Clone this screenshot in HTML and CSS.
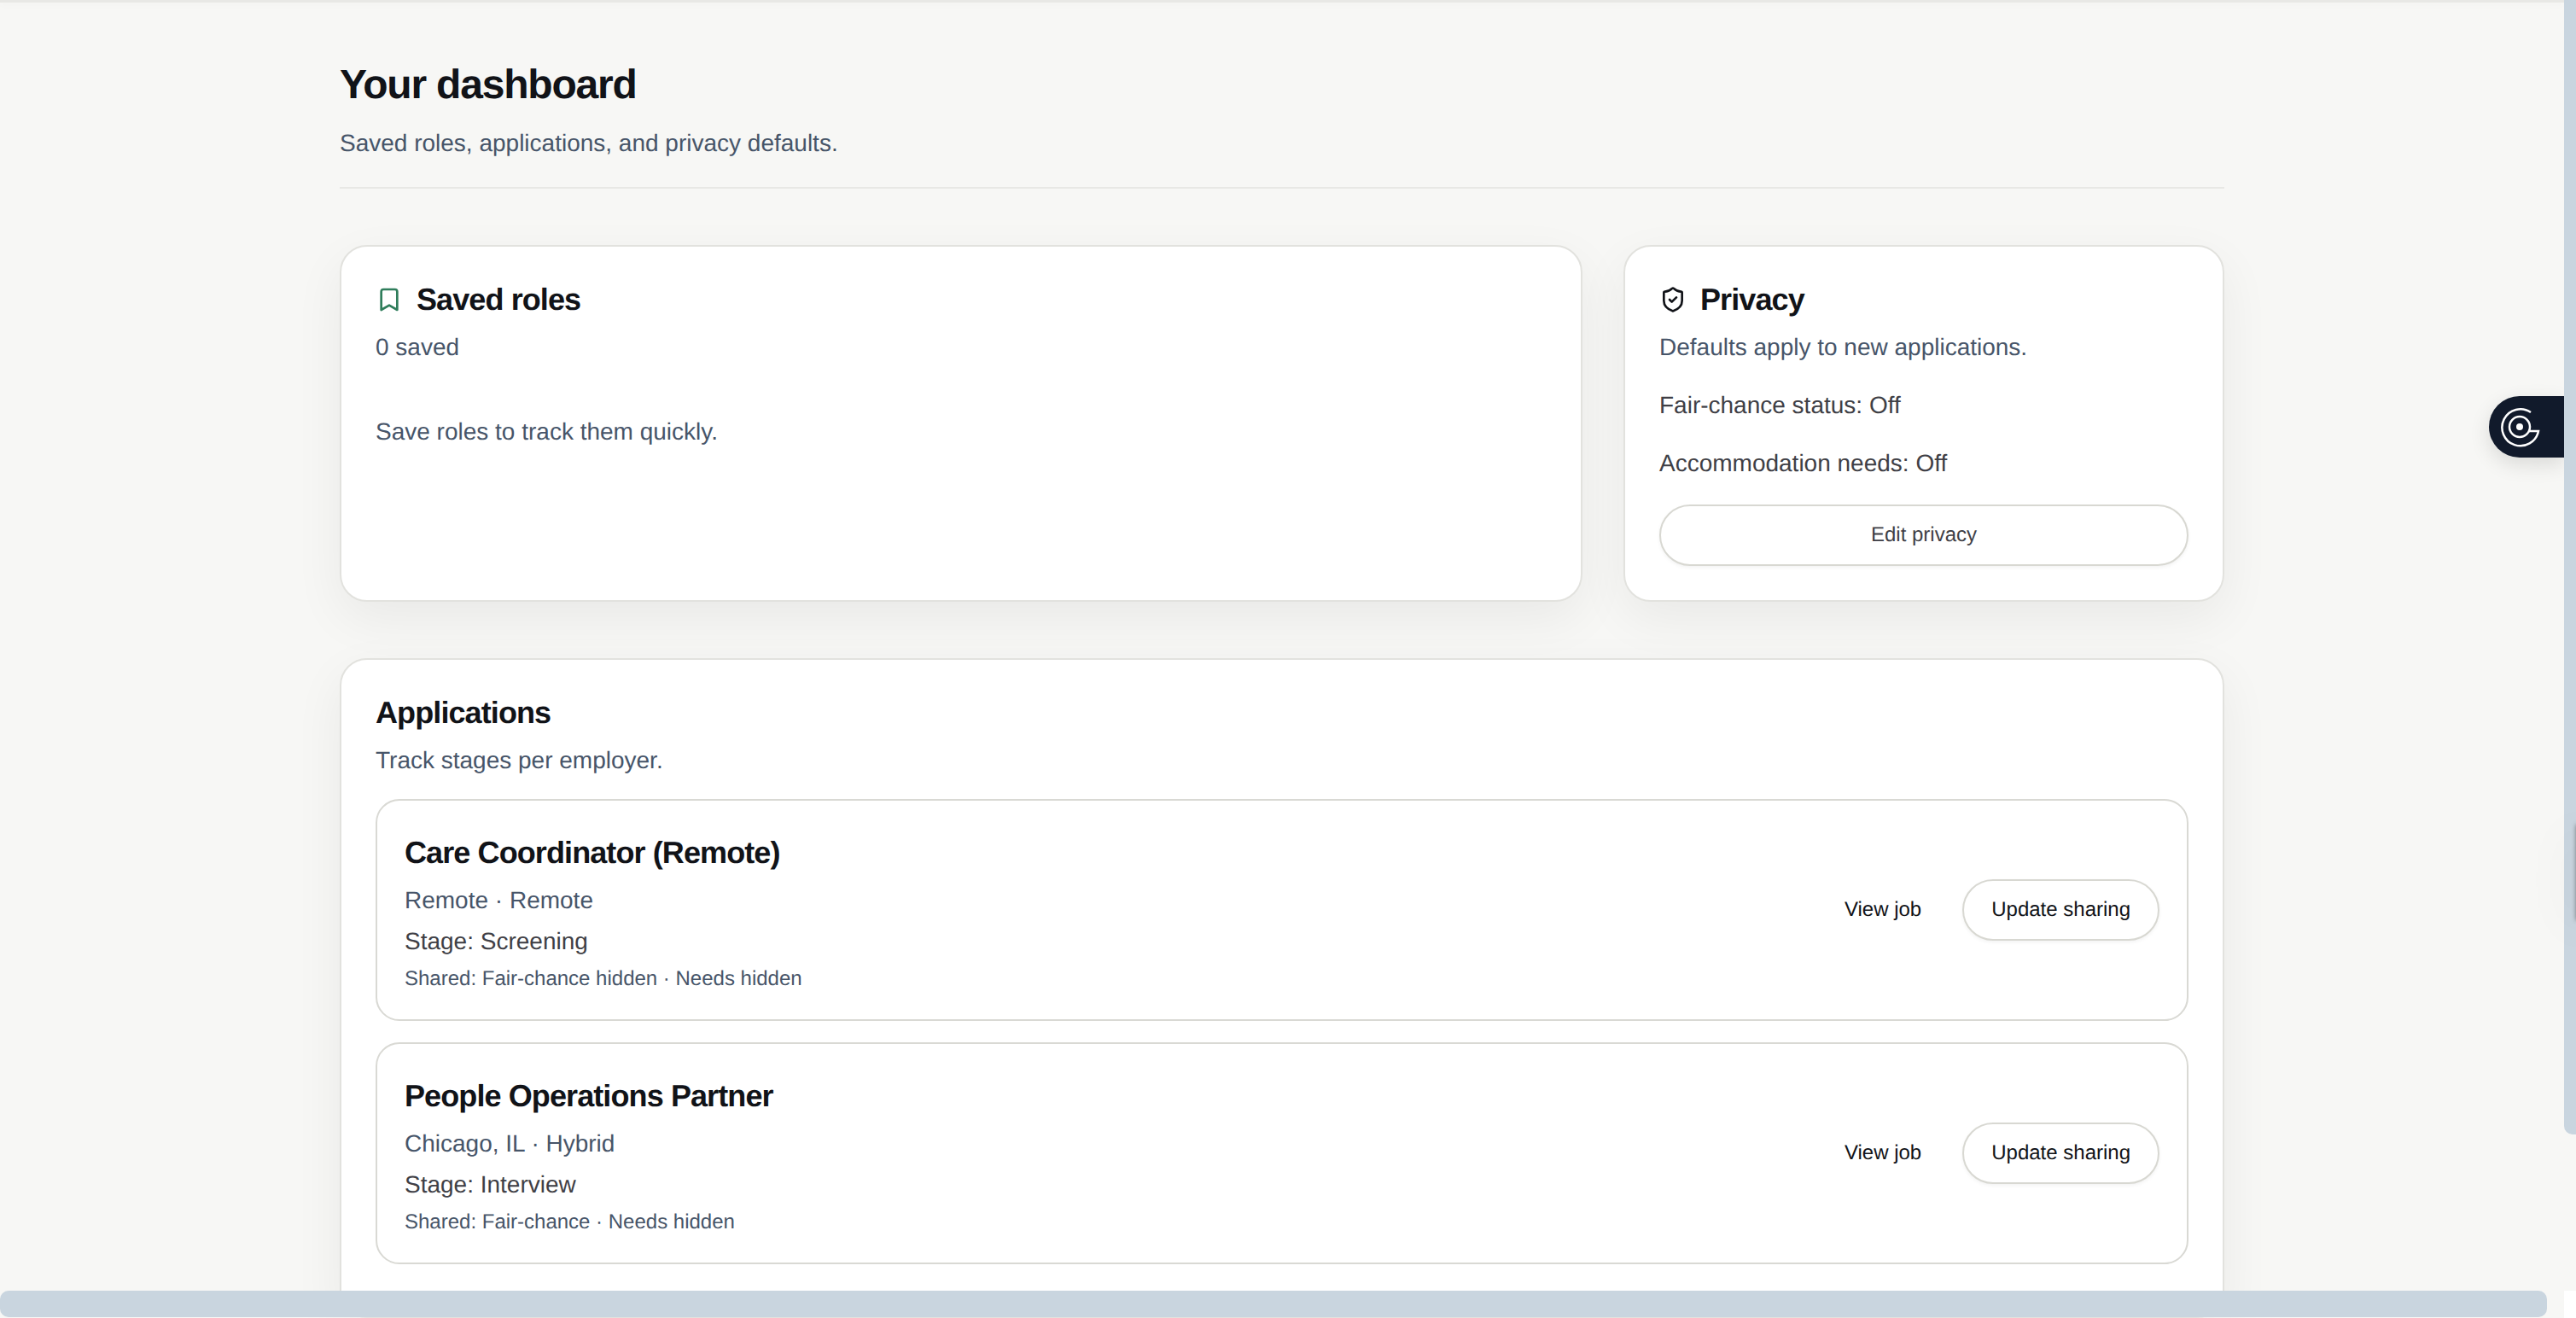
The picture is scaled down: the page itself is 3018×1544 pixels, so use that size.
FILE: index.html
```html
<!DOCTYPE html>
<html lang="en">

<head>
	<title>Your dashboard</title>
	<link rel="stylesheet" href="styles.css">
</head>

<body>
	<div class="topbar"></div>
	<main class="container">
		<header class="page-head">
			<h1>Your dashboard</h1>
			<p class="muted">Saved roles, applications, and privacy defaults.</p>
		</header>

		<div class="top-grid">
			<section class="card saved-card">
				<h2 class="card-title">
					<svg class="icon icon-green" viewBox="0 0 24 24">
						<path d="m19 21-7-4-7 4V5a2 2 0 0 1 2-2h10a2 2 0 0 1 2 2v16z" />
					</svg>
					Saved roles
				</h2>
				<p class="muted sub">0 saved</p>
				<p class="muted empty">Save roles to track them quickly.</p>
			</section>

			<section class="card privacy-card">
				<h2 class="card-title">
					<svg class="icon" viewBox="0 0 24 24">
						<path d="M20 13c0 5-3.5 7.5-7.66 8.95a1 1 0 0 1-.67-.01C7.5 20.5 4 18 4 13V6a1 1 0 0 1 1-1c2 0 4.5-1.2 6.24-2.72a1.17 1.17 0 0 1 1.52 0C14.51 3.81 17 5 19 5a1 1 0 0 1 1 1z" />
						<path d="m9 12 2 2 4-4" />
					</svg>
					Privacy
				</h2>
				<p class="muted sub">Defaults apply to new applications.</p>
				<p class="setting">Fair-chance status: Off</p>
				<p class="setting">Accommodation needs: Off</p>
				<a class="btn btn-wide">Edit privacy</a>
			</section>
		</div>

		<section class="card apps-card">
			<h2 class="card-title">Applications</h2>
			<p class="muted sub">Track stages per employer.</p>

			<div class="app-row">
				<div class="app-info">
					<h3>Care Coordinator (Remote)</h3>
					<p class="muted app-place">Remote · Remote</p>
					<p class="app-stage">Stage: Screening</p>
					<p class="muted app-shared">Shared: Fair-chance hidden · Needs hidden</p>
				</div>
				<div class="app-actions">
					<a class="link-btn">View job</a>
					<a class="btn">Update sharing</a>
				</div>
			</div>

			<div class="app-row">
				<div class="app-info">
					<h3>People Operations Partner</h3>
					<p class="muted app-place">Chicago, IL · Hybrid</p>
					<p class="app-stage">Stage: Interview</p>
					<p class="muted app-shared">Shared: Fair-chance · Needs hidden</p>
				</div>
				<div class="app-actions">
					<a class="link-btn">View job</a>
					<a class="btn">Update sharing</a>
				</div>
			</div>
		</section>
	</main>

	<!-- floating widget, sits over the page -->
	<div class="widget">
		<svg viewBox="0 0 48 48">
			<path d="M37 7A21.5 21.5 0 1 0 46 29H34" />
			<circle cx="24" cy="24" r="12" />
			<circle class="dot" cx="24" cy="24" r="4" />
		</svg>
	</div>

	<!-- scrollbars -->
	<div class="vtrack"><div class="vthumb"></div></div>
	<div class="hthumb"></div>
	<div class="corner"></div>

	<!-- tab parked just off the right edge, only its shadow shows -->
	<div class="edge-tab"></div>
</body>

</html>
```

FILE: styles.css
```css
html, body {
	margin: 0;
	height: 1544px;
	overflow: hidden;
}

body {
	position: relative;
	background-color: #f7f7f5;
	color: #3f3f46;
	font-family: "Liberation Sans", Arial, sans-serif;
	font-size: 28px;
	line-height: 40px;
	text-rendering: geometricPrecision;
}

h1, h2, h3, p {
	margin: 0;
}

.topbar {
	height: 3px;
	margin-right: 14px;
	background-color: #e8e8e5;
	box-shadow: 0 2px 8px rgba(0, 0, 0, .04);
}

.container {
	width: 2208px;
	margin-left: 398px;
}

.page-head {
	padding-top: 67px;
	padding-bottom: 31px;
	border-bottom: 2px solid #e8e8e5;
}

h1 {
	color: #111318;
	font-size: 48px;
	line-height: 60px;
	font-weight: bold;
	letter-spacing: -.025em;
}

.muted {
	color: #475569;
}

.page-head .muted {
	margin-top: 18px;
}

.top-grid {
	display: grid;
	grid-template-columns: 1456px 704px;
	gap: 48px;
	margin-top: 66px;
}

.card {
	box-sizing: border-box;
	background-color: #fff;
	border: 2px solid #e2e2de;
	border-radius: 32px;
	padding: 40px;
	box-shadow: 0 20px 60px rgba(0, 0, 0, .06);
}

.saved-card, .privacy-card {
	height: 418px;
}

.card-title {
	display: flex;
	align-items: center;
	gap: 16px;
	color: #111318;
	font-size: 36px;
	line-height: 44px;
	font-weight: bold;
	letter-spacing: -.025em;
}

.icon {
	width: 32px;
	height: 32px;
	fill: none;
	stroke: #111318;
	stroke-width: 2;
	stroke-linecap: round;
	stroke-linejoin: round;
}

.icon-green {
	stroke: #2f7d5b;
}

.sub {
	margin-top: 14px;
}

.privacy-card .sub {
	margin-bottom: 1px;
}

.apps-card .sub {
	margin-bottom: 3px;
}

.empty {
	margin-top: 59px;
}

.setting {
	margin-top: 28px;
}

.btn {
	display: flex;
	align-items: center;
	justify-content: center;
	box-sizing: border-box;
	height: 72px;
	padding: 0 32px;
	background-color: #fff;
	border: 2px solid #d8d8d2;
	border-radius: 36px;
	box-shadow: 0 2px 4px rgba(0, 0, 0, .05);
	color: #111318;
	font-size: 24px;
}

.btn-wide {
	margin-top: 28px;
	color: #3f3f46;
}

.apps-card {
	height: 773px;
	margin-top: 66px;
}

.app-row {
	display: flex;
	align-items: center;
	justify-content: space-between;
	box-sizing: border-box;
	height: 260px;
	margin-top: 25px;
	padding: 0 32px;
	border: 2px solid #d9d9d4;
	border-radius: 28px;
}

.app-info {
	padding-top: 10px;
}

.app-row h3 {
	color: #111318;
	font-size: 36px;
	line-height: 44px;
	font-weight: bold;
	letter-spacing: -.025em;
}

.app-place {
	margin-top: 14px;
}

.app-stage {
	margin-top: 8px;
}

.app-shared {
	margin-top: 6px;
	font-size: 24px;
	line-height: 36px;
}

.app-actions {
	display: flex;
	align-items: center;
	gap: 48px;
}

.link-btn {
	color: #111318;
	font-size: 24px;
}

.widget {
	position: absolute;
	top: 464px;
	right: 14px;
	width: 88px;
	height: 72px;
	box-sizing: border-box;
	padding: 12px 0 0 12px;
	background-color: #111a2b;
	border-radius: 36px 0 0 36px;
	box-shadow: 0 8px 24px rgba(0, 0, 0, .12);
}

.widget svg {
	display: block;
	width: 48px;
	height: 48px;
	fill: none;
	stroke: #fff;
	stroke-width: 2.5;
}

.widget .dot {
	fill: #fff;
	stroke: none;
}

.edge-tab {
	position: absolute;
	top: 966px;
	left: 3018px;
	width: 12px;
	height: 112px;
	box-shadow: 0 0 5px rgba(60, 60, 60, .6), 0 8px 60px rgba(0, 0, 0, .1);
}

.vtrack {
	position: absolute;
	top: 0;
	right: 0;
	bottom: 0;
	width: 14px;
	background-color: #f7f7f5;
}

.vthumb {
	height: 1329px;
	background-color: #c9d5df;
	border-radius: 0 0 0 10px;
}

.hthumb {
	position: absolute;
	left: 0;
	bottom: 1px;
	width: 2984px;
	height: 31px;
	background-color: #c9d5df;
	border-radius: 10px;
}

.corner {
	position: absolute;
	right: 0;
	bottom: 0;
	width: 14px;
	height: 32px;
	background-color: #fff;
}
```
